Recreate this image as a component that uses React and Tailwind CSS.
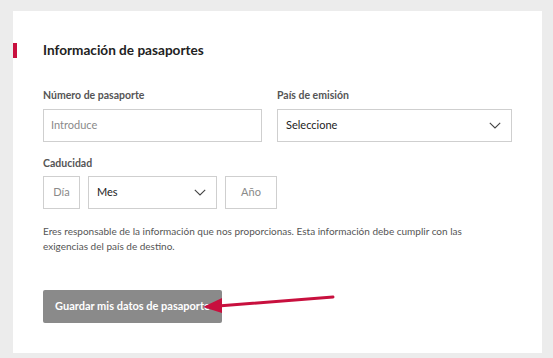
import React from 'react';

const Chevron = () => (
  <svg width="12" height="7" viewBox="0 0 12 7" fill="none">
    <path d="M0.8 0.8l5.2 5.2 5.2-5.2" stroke="#444" strokeWidth="1.1" />
  </svg>
);

export default function App() {
  return (
    <div className="h-[358px] w-[553px] bg-[#ececec] pt-[11px] pl-[13px] font-['Lato',sans-serif]">
      <div className="relative w-[529px] h-[342px] bg-white pt-[32px]">
        {/* section title with accent bar */}
        <div className="flex items-center h-[15px]">
          <div className="w-[4px] h-[15px] bg-[#c8103e]" />
          <h2 className="ml-[26px] text-[13.6px] font-bold text-[#222]">Información de pasaportes</h2>
        </div>

        <div className="px-[30px]">
          <div className="flex gap-[15px] mt-[30px]">
            <div className="w-[219px]">
              <label className="block text-[10.5px] font-bold text-[#555] leading-[14px]">Número de pasaporte</label>
              <div className="mt-[7px] h-[33px] border border-[#cfcfcf] flex items-center px-[7px] text-[11px] text-[#8a8a8a]">
                Introduce
              </div>
            </div>
            <div className="flex-1">
              <label className="block text-[10.5px] font-bold text-[#555] leading-[14px]">País de emisión</label>
              <div className="mt-[7px] h-[33px] border border-[#cfcfcf] flex items-center justify-between pl-[8px] pr-[10px] text-[11px] text-[#222]">
                <span>Seleccione</span>
                <Chevron />
              </div>
            </div>
          </div>

          <label className="block mt-[14px] text-[10.5px] font-bold text-[#555] leading-[14px]">Caducidad</label>
          <div className="flex mt-[6px] h-[33px]">
            <div className="w-[37px] border border-[#cfcfcf] flex items-center justify-center text-[11px] text-[#8a8a8a]">Día</div>
            <div className="ml-[8px] w-[129px] border border-[#cfcfcf] flex items-center justify-between pl-[8px] pr-[10px] text-[11px] text-[#222]">
              <span>Mes</span>
              <Chevron />
            </div>
            <div className="ml-[8px] w-[52px] border border-[#cfcfcf] flex items-center justify-center text-[11px] text-[#8a8a8a]">Año</div>
          </div>

          <p className="mt-[15px] w-[440px] text-[10px] leading-[15px] text-[#555]">
            Eres responsable de la información que nos proporcionas. Esta información debe cumplir con las exigencias del país de destino.
          </p>

          <button className="mt-[36px] w-[179px] h-[33px] bg-[#8a8a8a] rounded-[2px] text-white text-[11px] font-bold">
            Guardar mis datos de pasaporte
          </button>
        </div>

        {/* annotation arrow */}
        <svg className="absolute left-0 top-0 pointer-events-none" width="529" height="342">
          <line x1="320" y1="286" x2="205" y2="295" stroke="#c8103e" strokeWidth="3" strokeLinecap="round" />
          <polygon points="190,296 209,287 209,302" fill="#c8103e" />
        </svg>
      </div>
    </div>
  );
}
